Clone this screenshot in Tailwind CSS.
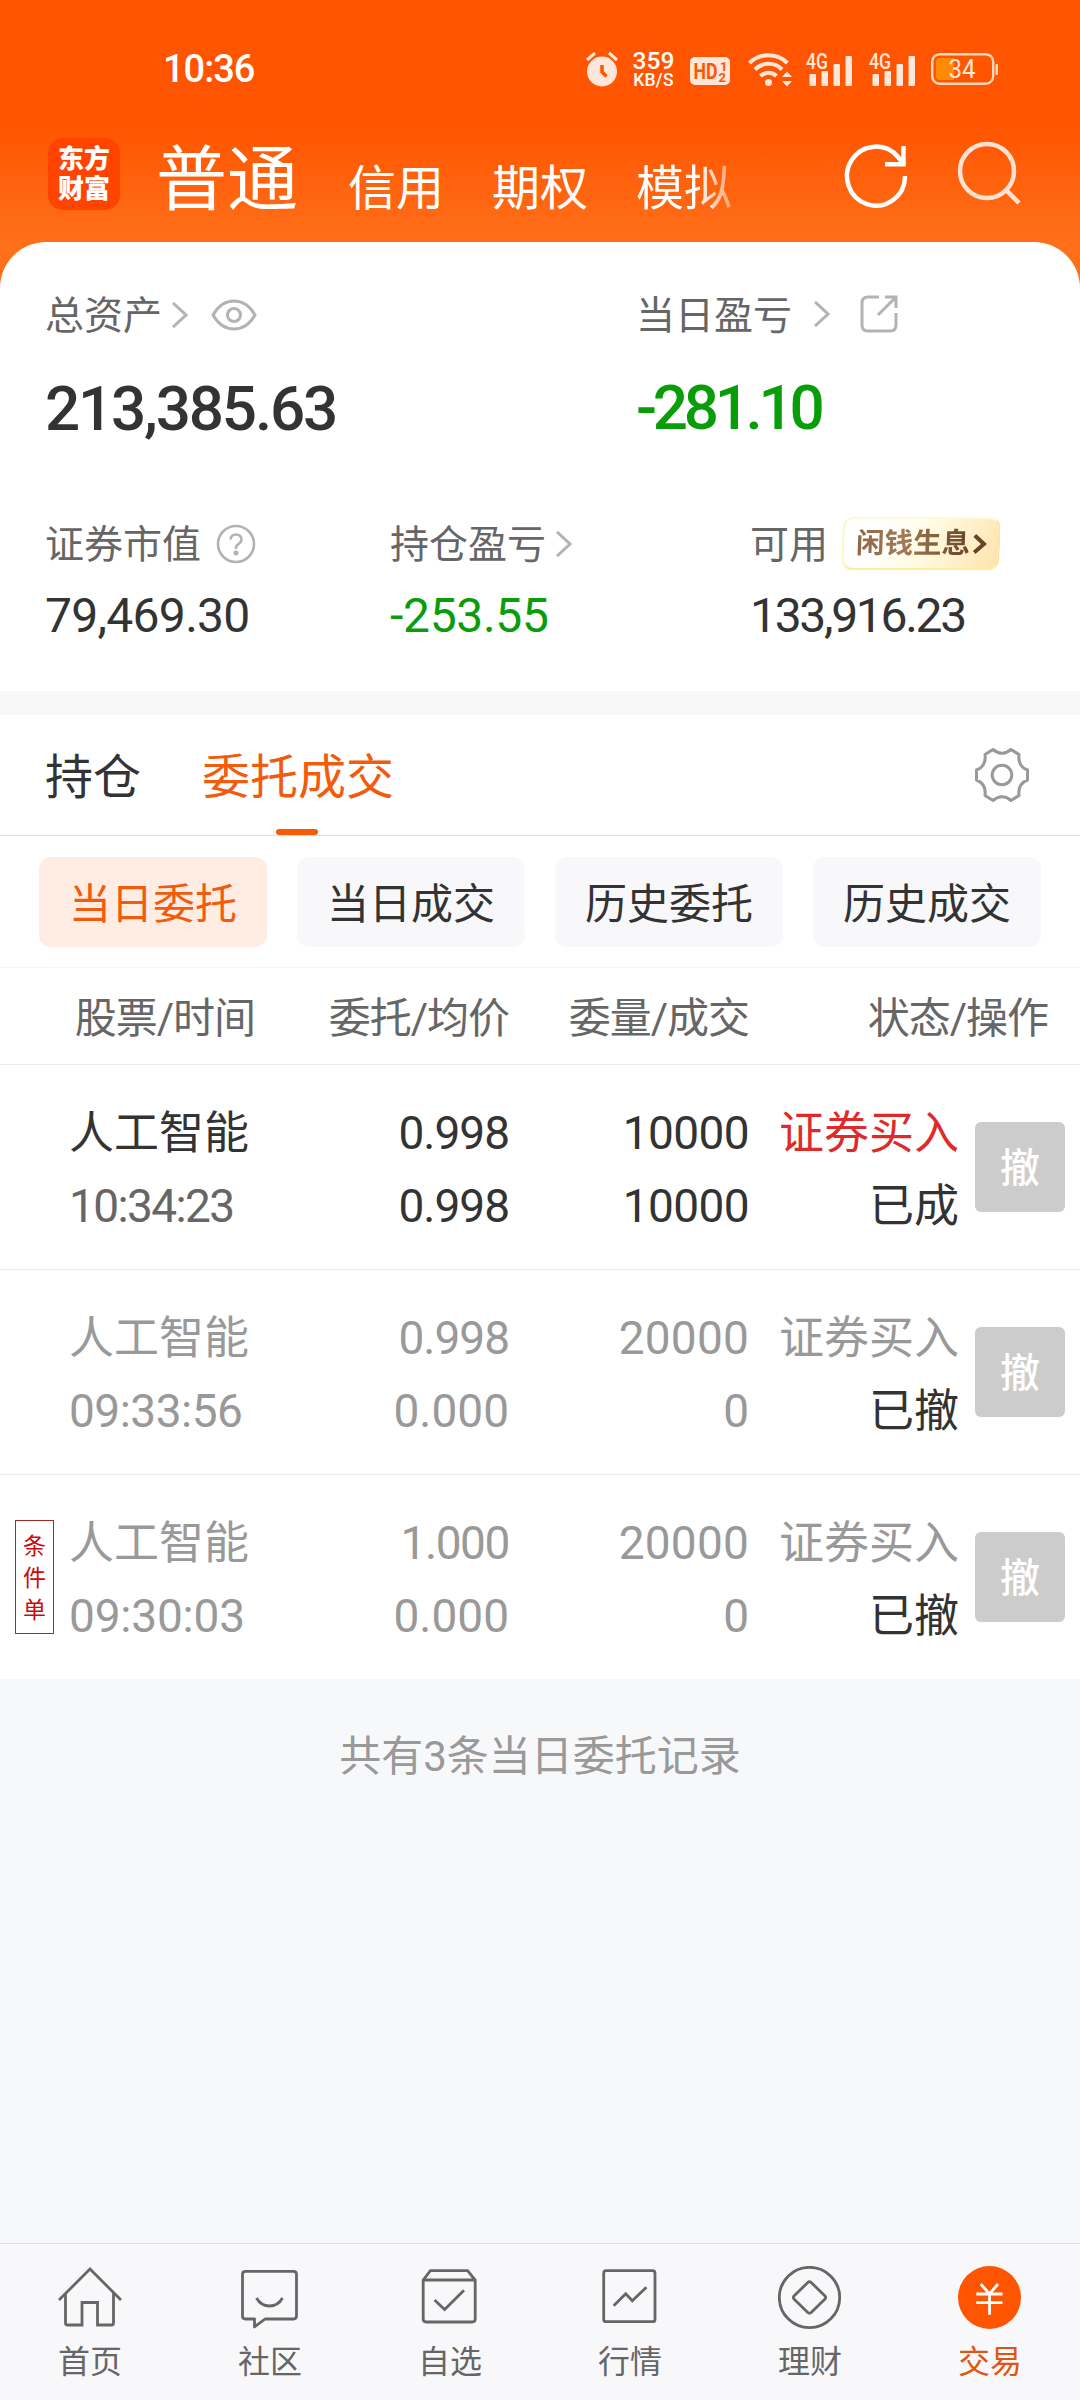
<!DOCTYPE html>
<html lang="zh-CN">
<head>
    <meta charset="UTF-8">
    <meta name="viewport" content="width=device-width, initial-scale=1.0">
    <title>交易</title>
    <script src="https://cdn.jsdelivr.net/npm/@tailwindcss/browser@4"></script>
</head>
<body class="flex flex-col w-[1080px] h-[2400px] overflow-hidden bg-[#f7f8fa] text-[#333] font-['Roboto','Noto_Sans_CJK_SC',sans-serif]">

    <div class="bg-[linear-gradient(#ff5500_125px,#ff6f1a_242px)]">
        <!-- status bar -->
        <div class="flex items-center h-[137px] pl-[163px] text-white">
            <span class="w-[423px] text-[38px] font-medium leading-none -tracking-[1px]">10:36</span>
            <svg class="w-8 h-9 text-[#ffe6da]" viewBox="0 0 32 36" fill="none">
                <circle cx="16" cy="20.5" r="15" fill="currentColor"/>
                <path d="M1 9L9 2M31 9L23 2" stroke="currentColor" stroke-width="3"/>
                <path d="M16 14V21L20.500 25.500" stroke="#ff5500" stroke-width="3.500"/>
            </svg>
            <div class="ml-[14px] w-[43px] font-medium text-center">
                <p class="text-[24.500px] leading-[23px] tracking-[0.100px]">359</p>
                <p class="text-[17.500px] leading-[17px] tracking-[0.300px]">KB/S</p>
            </div>
            <svg class="ml-[15px] mt-1 w-10 h-7" viewBox="0 0 40 28" fill="#ff5500" font-weight="700">
                <rect width="40" height="28" rx="5" fill="#ffe6da"/>
                <text x="3.500" y="22" font-size="22" textLength="24" lengthAdjust="spacingAndGlyphs">HD</text>
                <text x="30" y="14" font-size="13">1</text>
                <text x="28.500" y="25" font-size="13">2</text>
            </svg>
            <svg class="ml-[18px] w-[45px] h-9 text-[#ffe6da]" viewBox="0 0 45 36" fill="none" stroke="currentColor" stroke-width="4">
                <path d="M1.500 12A27 27 0 0 1 39.500 12M7 18.500A19 19 0 0 1 34 18.500M12.500 25A11.500 11.500 0 0 1 28.500 25"/>
                <circle cx="20.500" cy="31.500" r="3.500" fill="currentColor" stroke="none"/>
                <path d="M34 26L39 20.500L44 26ZM34 30L39 35.500L44 30Z" fill="currentColor" stroke="none"/>
            </svg>
            <svg class="ml-[13px] w-[47px] h-12 text-[#ffe6da]" viewBox="0 -6 47 48" fill="currentColor">
                <text x="0" y="18" font-size="22" font-weight="500" textLength="22" lengthAdjust="spacingAndGlyphs">4G</text>
                <rect x="3.500" y="23" width="6.500" height="12" rx="1"/>
                <rect x="15.500" y="20" width="6.500" height="15" rx="1"/>
                <rect x="27.500" y="13" width="6.500" height="22" rx="1"/>
                <rect x="39.500" y="5" width="6.500" height="30" rx="1"/>
            </svg>
            <svg class="ml-4 w-[47px] h-12 text-[#ffe6da]" viewBox="0 -6 47 48" fill="currentColor">
                <text x="0" y="18" font-size="22" font-weight="500" textLength="22" lengthAdjust="spacingAndGlyphs">4G</text>
                <rect x="3.500" y="23" width="6.500" height="12" rx="1"/>
                <rect x="15.500" y="20" width="6.500" height="15" rx="1"/>
                <rect x="27.500" y="13" width="6.500" height="22" rx="1"/>
                <rect x="39.500" y="5" width="6.500" height="30" rx="1"/>
            </svg>
            <svg class="ml-[15px] w-[68px] h-8" viewBox="0 0 68 32" fill="none">
                <rect x="1.200" y="1.200" width="61" height="29.500" rx="7.500" stroke="#ffd9bd" stroke-width="2.400"/>
                <path d="M9 5H23V27H9Q5 27 5 23V9Q5 5 9 5Z" fill="#ff8a05"/>
                <rect x="64.500" y="11" width="2.500" height="11" rx="1" fill="#ffd9bd"/>
                <text x="17.500" y="25" font-size="25" fill="#ffe6da" textLength="27" lengthAdjust="spacingAndGlyphs">34</text>
            </svg>
        </div>

        <!-- account type tabs -->
        <div class="flex h-[105px] pl-12 text-white">
            <div class="flex flex-col items-center justify-center mt-px w-[72px] h-[72px] rounded-[15px] bg-[#ff4400] text-[26px] leading-[30px] font-black">
                <span>东方</span>
                <span>财富</span>
            </div>
            <div class="flex items-baseline w-[694px] ml-[36px] text-[48px] leading-[86px]">
                <span class="w-[192px] text-[71px]">普通</span>
                <span class="w-[144px] translate-y-px">信用</span>
                <span class="w-[144px] translate-y-px">期权</span>
                <span class="translate-y-px bg-[linear-gradient(90deg,#fff_62%,#ffffff66)] bg-clip-text text-transparent">模拟</span>
            </div>
            <svg class="-ml-[6px] mt-[5px] w-16 h-[66px]" viewBox="0 0 64 66" fill="none" stroke="#fff" stroke-width="4.500">
                <path d="M61 34A29 29.500 0 1 1 54.500 15.500L60 22"/>
                <path d="M59.500 4V22.300H41"/>
            </svg>
            <svg class="ml-[49px] mt-[4px] w-16 h-[66px]" viewBox="0 0 64 66" fill="none" stroke="#ffe2d2" stroke-width="4.500">
                <circle cx="30" cy="30" r="27"/>
                <path d="M49 49L62 62"/>
            </svg>
        </div>

        <!-- asset summary -->
        <div class="h-[449px] px-[45px] pt-[48px] rounded-t-[46px] bg-white">
            <div class="flex">
                <div class="w-[591px]">
                    <div class="flex items-center h-[52px] text-[39px] leading-none text-[#666]">
                        总资产
                        <svg class="ml-[10px] -mt-[2px] w-4 h-[26px]" viewBox="0 0 16 26" fill="none" stroke="#b3b3b3" stroke-width="3"><path d="M1 1L14 13L1 25"/></svg>
                        <svg class="ml-[23px] -mt-[2px] w-[46px] h-8" viewBox="0 0 46 32" fill="none" stroke="#b3b3b3" stroke-width="3">
                            <path d="M2 16Q10 2 23 2T44 16Q36 30 23 30T2 16Z"/>
                            <circle cx="23" cy="16" r="6.500"/>
                        </svg>
                    </div>
                    <p class="mt-[33px] text-[62px] leading-[68px] font-medium -tracking-[2.200px]">213,385.63</p>
                </div>
                <div>
                    <div class="flex items-center h-[52px] text-[39px] leading-none text-[#666]">
                        当日盈亏
                        <svg class="ml-[22px] -mt-1 w-4 h-[26px]" viewBox="0 0 16 26" fill="none" stroke="#b3b3b3" stroke-width="3"><path d="M1 1L14 13L1 25"/></svg>
                        <svg class="ml-[29px] -mt-[4px] w-10 h-10" viewBox="0 0 40 40" fill="none" stroke="#b3b3b3" stroke-width="3">
                            <path d="M20 3H9Q3 3 3 9V31Q3 37 9 37H31Q37 37 37 31V19"/>
                            <path d="M26 3H37V14M36 4L19 21"/>
                        </svg>
                    </div>
                    <p class="mt-[32px] text-[62px] leading-[68px] font-medium -tracking-[4.300px] text-[#0a9d0a]">-281.10</p>
                </div>
            </div>
            <div class="flex mt-[74px]">
                <div class="w-[345px]">
                    <div class="flex items-center h-[56px] text-[39px] leading-none text-[#666]">
                        证券市值
                        <svg class="ml-[15px] -mt-[2px] w-10 h-10" viewBox="0 0 40 40" fill="none" stroke="#b3b3b3" stroke-width="2.600">
                            <circle cx="20" cy="20" r="18"/>
                            <path d="M14.500 15.500Q15 10.500 20 10.500T25.500 15.500Q25.500 18 22.500 20T20 25"/>
                            <circle cx="20" cy="29" r="1.200"/>
                        </svg>
                    </div>
                    <p class="mt-[15px] text-[48px] leading-[56px] -tracking-[0.700px]">79,469.30</p>
                </div>
                <div class="w-[360px]">
                    <div class="flex items-center h-[56px] text-[39px] leading-none text-[#666]">
                        持仓盈亏
                        <svg class="ml-[10px] -mt-[2px] w-4 h-[26px]" viewBox="0 0 16 26" fill="none" stroke="#b3b3b3" stroke-width="3"><path d="M1 1L14 13L1 25"/></svg>
                    </div>
                    <p class="mt-[15px] text-[48px] leading-[56px] -tracking-[0.300px] text-[#0a9d0a]">-253.55</p>
                </div>
                <div>
                    <div class="flex items-center h-[56px] text-[39px] leading-none text-[#666]">
                        可用
                        <div class="flex items-center ml-[14px] -mt-[4px] pl-[12px] w-[158px] h-[53px] rounded-[11px] border-2 border-[#fff6bd] border-t-[#fff9d6] border-r-[#fde3a4] border-b-[#fdeea0] -skew-x-2 bg-[linear-gradient(115deg,#ffffff_25%,#fffce4_50%,#ffe3ae)]">
                            <span class="bg-[linear-gradient(90deg,#8f6745,#a27a56_40%,#6b4427)] bg-clip-text text-transparent text-[28.500px] leading-[36px] font-bold">闲钱生息</span>
                            <svg class="ml-[3px] w-[14px] h-5" viewBox="0 0 14 20" fill="none" stroke="#6b4427" stroke-width="4"><path d="M1.500 1.500L11 10L1.500 18.500"/></svg>
                        </div>
                    </div>
                    <p class="mt-[15px] text-[48px] leading-[56px] -tracking-[2.300px]">133,916.23</p>
                </div>
            </div>
        </div>
    </div>

    <!-- section tabs -->
    <div class="flex items-center mt-6 h-[121px] pl-[45px] pr-[50px] border-b border-[#ddd] bg-white text-[48px]">
        <span class="pt-[5px] leading-[115px]">持仓</span>
        <span class="relative pt-[5px] ml-[61px] leading-[115px] text-[#f25a0c]">委托成交
            <i class="absolute bottom-0 left-[74px] w-[42px] h-[6px] rounded-full bg-[#f95a06]"></i>
        </span>
        <svg class="ml-auto w-14 h-14" viewBox="-28 -28 56 56" fill="none" stroke="#999" stroke-width="3" stroke-linejoin="round">
            <path d="M-9 -25.500Q0 -18 9 -25.500L17 -20.500Q15.500 -9 25.500 -5V5Q15.500 9 17 20.500L9 25.500Q0 18 -9 25.500L-17 20.500Q-15.500 9 -25.500 5V-5Q-15.500 -9 -17 -20.500Z"/>
            <circle r="9.800"/>
        </svg>
    </div>

    <div class="flex gap-[30px] h-[132px] px-[39px] pt-[21px] border-b border-[#f5f5f5] bg-white text-[42px] leading-[95px] text-center">
        <span class="w-[228px] h-[90px] rounded-xl bg-[#ffede4] text-[#f25a0c]">当日委托</span>
        <span class="w-[228px] h-[90px] rounded-xl bg-[#f8f8fa]">当日成交</span>
        <span class="w-[228px] h-[90px] rounded-xl bg-[#f8f8fa]">历史委托</span>
        <span class="w-[228px] h-[90px] rounded-xl bg-[#f8f8fa]">历史成交</span>
    </div>

    <!-- order list -->
    <div class="grid grid-cols-[255px_254px_240px_299px] h-[97px] border-b border-[#ebebeb] bg-white text-[42px] leading-[102px] -tracking-[1px] text-[#666] text-right">
        <span>股票/时间</span>
        <span>委托/均价</span>
        <span>委量/成交</span>
        <span>状态/操作</span>
    </div>

    <div class="grid grid-cols-[69px_201px_239px_240px_210px_106px] items-center h-[205px] border-b border-[#ebebeb] bg-white text-[46px] leading-[73px] text-right">
        <span></span>
        <div class="pt-[5px] text-left">
            <p class="text-[45px]">人工智能</p>
            <p class="text-[#666] -tracking-[1.600px]">10:34:23</p>
        </div>
        <div class="pt-[5px] -tracking-[1px]"><p>0.998</p><p>0.998</p></div>
        <div class="pt-[5px] -tracking-[0.600px]"><p>10000</p><p>10000</p></div>
        <div class="pt-[5px] text-[45px]"><p class="text-[#e02a2a]">证券买入</p><p>已成</p></div>
        <button class="justify-self-end pt-1 w-[90px] h-[90px] rounded-md bg-[#ccc] text-[40px] leading-none font-medium text-white">撤</button>
    </div>

    <div class="grid grid-cols-[69px_201px_239px_240px_210px_106px] items-center h-[205px] border-b border-[#ebebeb] bg-white text-[46px] leading-[73px] text-right text-[#999]">
        <span></span>
        <div class="pt-[5px] text-left">
            <p class="text-[45px]">人工智能</p>
            <p class="-tracking-[0.500px]">09:33:56</p>
        </div>
        <div class="pt-[5px]"><p class="-tracking-[1px]">0.998</p><p>0.000</p></div>
        <div class="pt-[5px]"><p class="tracking-[0.200px]">20000</p><p>0</p></div>
        <div class="pt-[5px] text-[45px]"><p>证券买入</p><p class="text-[#333]">已撤</p></div>
        <button class="justify-self-end pt-1 w-[90px] h-[90px] rounded-md bg-[#ccc] text-[40px] leading-none font-medium text-white">撤</button>
    </div>

    <div class="grid grid-cols-[69px_201px_239px_240px_210px_106px] items-center h-[204px] bg-white text-[46px] leading-[73px] text-right text-[#999]">
        <div class="flex flex-col items-center justify-center ml-[15px] pt-[3px] w-[39px] h-[114px] border border-[#a82828] text-[23px] leading-8 text-[#cc0a0a]">
            <span>条</span><span>件</span><span>单</span>
        </div>
        <div class="pt-[5px] text-left">
            <p class="text-[45px]">人工智能</p>
            <p class="-tracking-[0.200px]">09:30:03</p>
        </div>
        <div class="pt-[5px]"><p class="-tracking-[1.400px]">1.000</p><p>0.000</p></div>
        <div class="pt-[5px]"><p class="tracking-[0.200px]">20000</p><p>0</p></div>
        <div class="pt-[5px] text-[45px]"><p>证券买入</p><p class="text-[#333]">已撤</p></div>
        <button class="justify-self-end pt-1 w-[90px] h-[90px] rounded-md bg-[#ccc] text-[40px] leading-none font-medium text-white">撤</button>
    </div>

    <p class="flex-1 pt-[48px] text-center text-[42px] leading-[60px] text-[#999]">共有3条当日委托记录</p>

    <!-- bottom navigation -->
    <div class="grid grid-cols-6 h-[157px] pt-[22px] border-t border-[#dedee0] bg-[#f8f8fa] text-[32px] leading-[64px] text-[#666]">
        <div class="flex flex-col items-center">
            <svg class="w-16 h-16" viewBox="0 0 64 64" fill="none" stroke="currentColor" stroke-width="2.800">
                <path d="M1 34L32 3L63 34M7.500 27V57Q7.500 59 9.500 59H24V36.500H39.500V59H53.500Q55.500 59 55.500 57V27"/>
            </svg>
            <span>首页</span>
        </div>
        <div class="flex flex-col items-center">
            <svg class="w-16 h-16" viewBox="0 0 64 64" fill="none" stroke="currentColor" stroke-width="2.800" stroke-linejoin="round">
                <path d="M7.500 5.300H55.500Q58.500 5.300 58.500 8.300V50Q58.500 53 55.500 53H27L16.500 61V53H7.500Q4.500 53 4.500 50V8.300Q4.500 5.300 7.500 5.300Z"/>
                <path d="M18.500 32Q23 40 31.500 40T44.500 32"/>
            </svg>
            <span>社区</span>
        </div>
        <div class="flex flex-col items-center">
            <svg class="w-16 h-16" viewBox="0 0 64 64" fill="none" stroke="currentColor" stroke-width="2.800">
                <path d="M5.200 14L12.400 4.700H49.600L57.200 14V53Q57.200 56 54.200 56H8.200Q5.200 56 5.200 53ZM5.200 14H57.200"/>
                <path d="M16.600 34L26.600 43.500L46 24.300"/>
            </svg>
            <span>自选</span>
        </div>
        <div class="flex flex-col items-center">
            <svg class="w-16 h-16" viewBox="0 0 64 64" fill="none" stroke="currentColor" stroke-width="2.800">
                <rect x="5.700" y="4.700" width="51.300" height="51" rx="2.500"/>
                <path d="M15.700 39.700L27.700 27.700L34.300 34.700L48.400 21.300"/>
            </svg>
            <span>行情</span>
        </div>
        <div class="flex flex-col items-center">
            <svg class="w-16 h-16" viewBox="0 0 64 64" fill="none" stroke="currentColor" stroke-width="2.800" stroke-linejoin="round">
                <circle cx="31.500" cy="31.500" r="30.200"/>
                <path d="M29.800 16.500Q31.500 15 33.200 16.500L46.800 29.800Q48.500 31.500 46.800 33.200L33.200 46.500Q31.500 48 29.800 46.500L16.200 33.200Q14.500 31.500 16.200 29.800Z"/>
            </svg>
            <span>理财</span>
        </div>
        <div class="flex flex-col items-center text-[#e05510]">
            <svg class="w-16 h-16" viewBox="0 0 64 64" fill="none" stroke="#fff" stroke-width="2.800">
                <circle cx="31.500" cy="31.500" r="31.500" fill="#ff5500" stroke="none"/>
                <path d="M22.800 18L31.500 28L40 18M18.300 28H44.500M18.300 36.700H44.500M31.500 28V48.700"/>
            </svg>
            <span>交易</span>
        </div>
    </div>

</body>
</html>
